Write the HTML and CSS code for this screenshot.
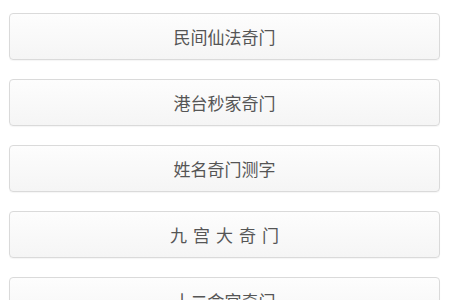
FILE: index.html
```html
<!DOCTYPE html>
<html lang="zh">
<head>
<meta charset="utf-8">
<link rel="stylesheet" href="styles.css">
</head>
<body>
<div class="menu">
  <a class="btn">民间仙法奇门</a>
  <a class="btn">港台秒家奇门</a>
  <a class="btn">姓名奇门测字</a>
  <a class="btn btn-wide">九宫大奇门</a>
  <a class="btn">十二命宫奇门</a>
</div>
</body>
</html>
```
FILE: styles.css
```css
html, body {
  margin: 0;
  padding: 0;
  background: #ffffff;
}
body {
  font-family: "Noto Sans CJK SC", "Noto Sans", sans-serif;
  overflow: hidden;
}
.menu {
  display: flex;
  flex-direction: column;
  gap: 19px;
  padding: 13px 10px 0 9px;
}
.btn {
  box-sizing: border-box;
  height: 47px;
  display: flex;
  align-items: center;
  justify-content: center;
  border: 1px solid #dadada;
  border-radius: 4px;
  background: linear-gradient(#fdfdfd, #f5f5f5);
  box-shadow: 0 1px 1px rgba(0,0,0,0.04);
  color: #555555;
  font-size: 17px;
  text-decoration: none;
}
.btn-wide {
  letter-spacing: 6px;
  text-indent: 6px;
}
```
